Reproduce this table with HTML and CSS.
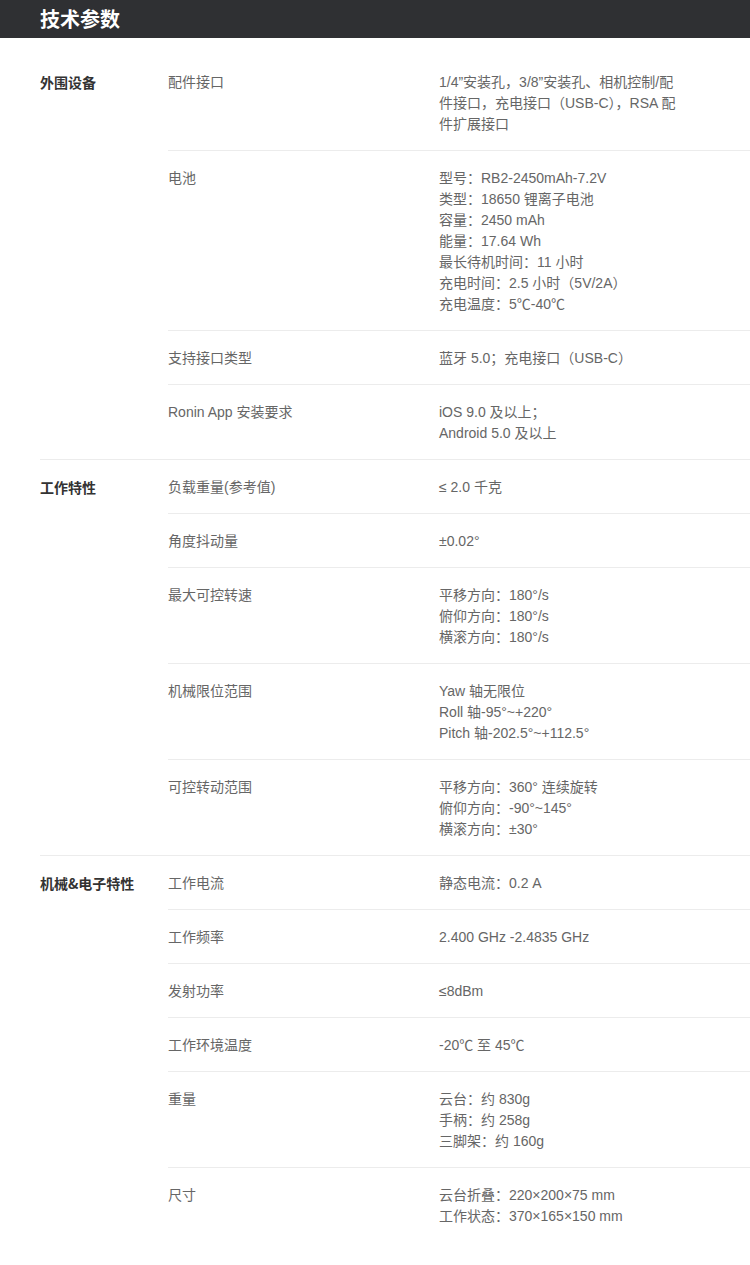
FILE: index.html
```html
<!DOCTYPE html>
<html lang="zh-CN">
<head>
<meta charset="utf-8">
<title>技术参数</title>
<link rel="stylesheet" href="styles.css">
</head>
<body>
<header class="bar"><h1 class="bar-title">技术参数</h1></header>
<main class="specs">
  <section class="group">
    <h2 class="group-name">外围设备</h2>
    <div class="rows">
      <div class="row"><div class="key">配件接口</div><div class="val">1/4”安装孔，3/8”安装孔、相机控制/配件接口，充电接口（USB-C），RSA 配件扩展接口</div></div>
      <div class="row"><div class="key">电池</div><div class="val">型号：RB2-2450mAh-7.2V<br>类型：18650 锂离子电池<br>容量：2450 mAh<br>能量：17.64 Wh<br>最长待机时间：11 小时<br>充电时间：2.5 小时（5V/2A）<br>充电温度：5℃-40℃</div></div>
      <div class="row"><div class="key">支持接口类型</div><div class="val">蓝牙 5.0；充电接口（USB-C）</div></div>
      <div class="row"><div class="key">Ronin App 安装要求</div><div class="val">iOS 9.0 及以上；<br>Android 5.0 及以上</div></div>
    </div>
  </section>
  <section class="group">
    <h2 class="group-name">工作特性</h2>
    <div class="rows">
      <div class="row"><div class="key">负载重量(参考值)</div><div class="val">≤ 2.0 千克</div></div>
      <div class="row"><div class="key">角度抖动量</div><div class="val">±0.02°</div></div>
      <div class="row"><div class="key">最大可控转速</div><div class="val">平移方向：180°/s<br>俯仰方向：180°/s<br>横滚方向：180°/s</div></div>
      <div class="row"><div class="key">机械限位范围</div><div class="val">Yaw 轴无限位<br>Roll 轴-95°~+220°<br>Pitch 轴-202.5°~+112.5°</div></div>
      <div class="row"><div class="key">可控转动范围</div><div class="val">平移方向：360° 连续旋转<br>俯仰方向：-90°~145°<br>横滚方向：±30°</div></div>
    </div>
  </section>
  <section class="group">
    <h2 class="group-name">机械&amp;电子特性</h2>
    <div class="rows">
      <div class="row"><div class="key">工作电流</div><div class="val">静态电流：0.2 A</div></div>
      <div class="row"><div class="key">工作频率</div><div class="val">2.400 GHz -2.4835 GHz</div></div>
      <div class="row"><div class="key">发射功率</div><div class="val">≤8dBm</div></div>
      <div class="row"><div class="key">工作环境温度</div><div class="val">-20℃ 至 45℃</div></div>
      <div class="row"><div class="key">重量</div><div class="val">云台：约 830g<br>手柄：约 258g<br>三脚架：约 160g</div></div>
      <div class="row"><div class="key">尺寸</div><div class="val">云台折叠：220×200×75 mm<br>工作状态：370×165×150 mm</div></div>
    </div>
  </section>
</main>
</body>
</html>
```

FILE: styles.css
```css
* { box-sizing: border-box; }
html, body { margin: 0; padding: 0; background: #fff; }
body {
  font-family: "Liberation Sans", "Noto Sans CJK SC", sans-serif;
  font-size: 14px;
  line-height: 21px;
  color: #666;
}
.bar {
  height: 38px;
  background: #2f3033;
  padding-left: 40px;
  display: flex;
  align-items: center;
}
.bar-title {
  margin: 0;
  font-size: 20px;
  font-weight: bold;
  color: #fff;
  font-family: "Noto Sans CJK SC", sans-serif;
  line-height: 24px;
}
.specs {
  padding: 17px 0 0 40px;
}
.group {
  display: flex;
  border-top: 1px solid #ececec;
}
.group:first-child { border-top: none; }
.group-name {
  margin: 0;
  width: 128px;
  flex-shrink: 0;
  padding-top: 17px;
  font-size: 14px;
  line-height: 21px;
  font-weight: bold;
  color: #333;
  font-family: "Noto Sans CJK SC", sans-serif;
}
.rows { flex: 1; }
.row {
  display: flex;
  padding: 17px 0 15px;
  border-top: 1px solid #ececec;
}
.row:first-child { border-top: none; }
.key { width: 271px; flex-shrink: 0; }
.val { width: 246px; }
```
